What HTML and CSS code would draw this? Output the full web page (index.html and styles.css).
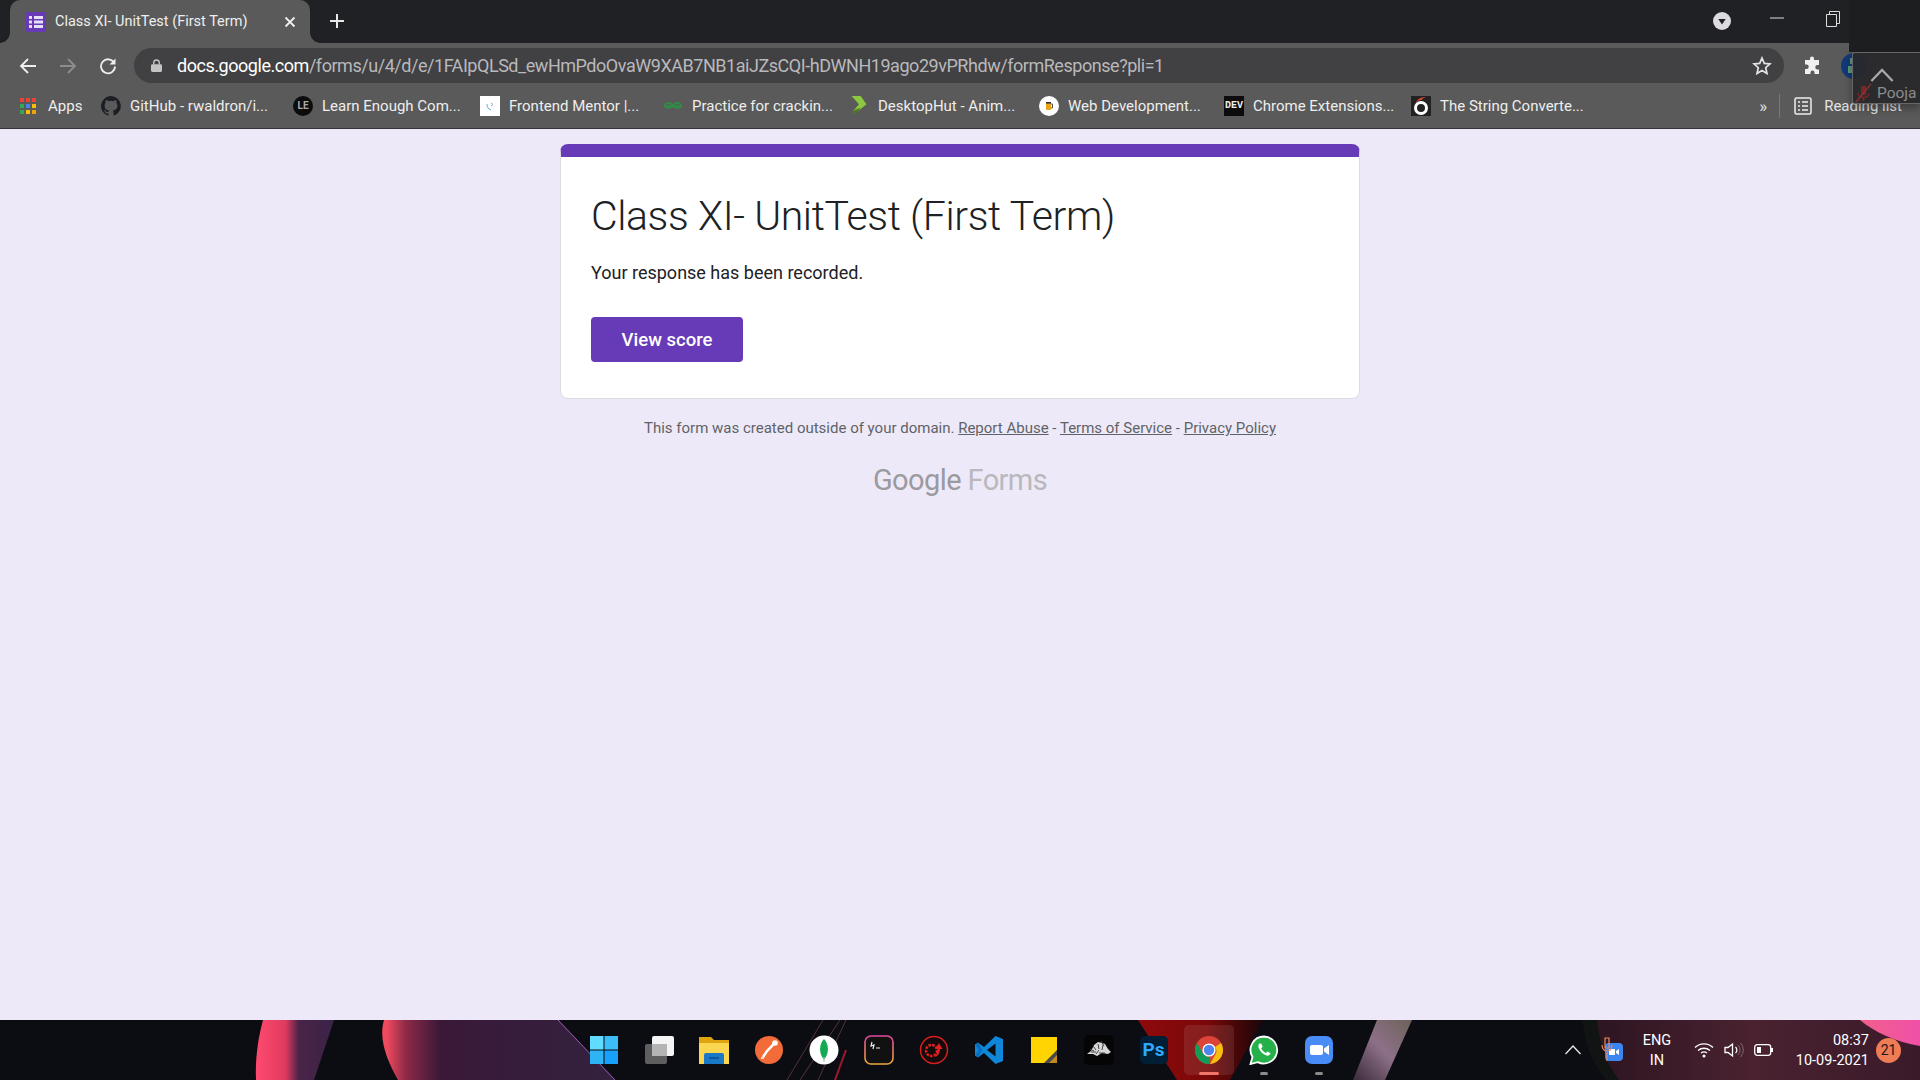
FILE: index.html
```html
<!DOCTYPE html>
<html lang="en">
<head>
  <meta charset="UTF-8">
  <title>Class XI- UnitTest (First Term)</title>
  <link rel="stylesheet" href="styles.css">
</head>
<body>
  <div class="browser">
    <!-- tab strip -->
    <div class="tabstrip">
      <div class="tab">
        <svg class="tab-icon" viewBox="0 0 20 20"><rect width="20" height="20" rx="1" fill="#673ab7"/><path d="M3 4h3v3H3zM8 4h9v3H8zM3 8.500h3v3H3zM8 8.500h9v3H8zM3 13h3v3H3zM8 13h9v3H8z" fill="#e8e0f6"/></svg>
        <span class="tab-title">Class XI- UnitTest (First Term)</span>
        <svg class="tab-close" viewBox="0 0 12 12"><path d="M1.500 1.500l9 9M10.500 1.500l-9 9" stroke="#eee" stroke-width="1.800"/></svg>
      </div>
      <svg class="new-tab" viewBox="0 0 16 16"><path d="M8 1v14M1 8h14" stroke="#e8e8e8" stroke-width="2"/></svg>
      <div class="win-controls">
        <svg class="tab-search" viewBox="0 0 18 18"><circle cx="9" cy="9" r="9" fill="#dcdce0"/><path d="M5.300 7h7.400L9 12.500z" fill="#202124"/></svg>
        <svg class="win-min" viewBox="0 0 14 2"><path d="M0 1h14" stroke="#ddd"/></svg>
        <svg class="win-max" viewBox="0 0 14 16"><path d="M.5 3.500h10v12H.500zM3.500 3.500V.5h10v12h-3" fill="none" stroke="#ddd"/></svg>
      </div>
    </div>

    <!-- address bar -->
    <div class="toolbar">
      <svg class="nav-icon" viewBox="0 0 18 18"><path d="M17 9H2M9 2L2 9l7 7" fill="none" stroke="#eee" stroke-width="1.800"/></svg>
      <svg class="nav-icon" viewBox="0 0 18 18"><path d="M1 9h15M9 2l7 7-7 7" fill="none" stroke="#8d8d8d" stroke-width="1.800"/></svg>
      <svg class="nav-icon" viewBox="0 0 18 18"><path d="M15.200 6A7 7 0 1 0 16 9.500" fill="none" stroke="#eee" stroke-width="1.800"/><path d="M16.500 1.500v6h-6z" fill="#eee"/></svg>
      <div class="omnibox">
        <svg class="lock" viewBox="0 0 12 14"><path d="M3 6V4a3 3 0 0 1 6 0v2" fill="none" stroke="#c4c4c4" stroke-width="1.500"/><rect y="5.500" width="12" height="8.500" rx="1.500" fill="#c4c4c4"/></svg>
        <span class="url"><b>docs.google.com</b>/forms/u/4/d/e/1FAIpQLSd_ewHmPdoOvaW9XAB7NB1aiJZsCQI-hDWNH19ago29vPRhdw/formResponse?pli=1</span>
        <svg class="star" viewBox="0 0 20 20"><path d="M10 2l2.300 5.400 5.700.5-4.300 3.800 1.300 5.700-5-3-5 3 1.300-5.700L2 7.900l5.700-.5z" fill="none" stroke="#e4e4e4" stroke-width="1.700"/></svg>
      </div>
      <svg class="puzzle" viewBox="0 0 20 20"><path d="M7 2.500a2 2 0 0 1 4 0V4h5v5h-1.500a2.200 2.200 0 0 0 0 4.500H16V18h-4.500v-1.500a2 2 0 0 0-4 0V18H2v-5h1.500a2.200 2.200 0 0 0 0-4.500H2V4h5z" fill="#f0f0f0"/></svg>
      <svg class="avatar" viewBox="0 0 26 26"><circle cx="13" cy="13" r="13" fill="#123a78"/><path d="M9 5h3v6H9zM7 13h6v7H7z" fill="#5f9a7a"/></svg>
    </div>

    <!-- bookmarks -->
    <div class="bookmarks">
      <div class="bm apps">
        <svg class="bm-icon" viewBox="0 0 16 16"><path d="M0 0h4v4H0z" fill="#ea4335"/><path d="M6 0h4v4H6z" fill="#ea4335"/><path d="M12 0h4v4h-4z" fill="#ea4335"/><path d="M0 6h4v4H0z" fill="#34a853"/><path d="M6 6h4v4H6z" fill="#4285f4"/><path d="M12 6h4v4h-4z" fill="#fbbc05"/><path d="M0 12h4v4H0z" fill="#34a853"/><path d="M6 12h4v4H6z" fill="#fbbc05"/><path d="M12 12h4v4h-4z" fill="#f5a205"/></svg>
        <span>Apps</span>
      </div>
      <div class="bm github">
        <svg class="bm-icon" viewBox="0 0 16 16"><path d="M8 0a8 8 0 0 0-2.500 15.600c.4.100.5-.2.500-.4v-1.400c-2.200.5-2.700-1-2.700-1-.4-.9-.9-1.200-.9-1.200-.7-.5.100-.5.100-.5.800.100 1.200.8 1.200.8.700 1.200 1.900.9 2.300.7.100-.5.300-.9.500-1.100-1.800-.2-3.600-.9-3.600-4 0-.9.300-1.600.8-2.100-.1-.2-.4-1 .1-2.100 0 0 .7-.2 2.200.8a7.600 7.600 0 0 1 4 0c1.500-1 2.200-.8 2.200-.8.400 1.100.2 1.900.1 2.100.5.600.8 1.300.8 2.100 0 3.100-1.900 3.700-3.700 3.900.3.300.6.800.6 1.500v2.200c0 .2.100.5.600.4A8 8 0 0 0 8 0z" fill="#1b1f23"/></svg>
        <span>GitHub - rwaldron/i...</span>
      </div>
      <div class="bm le">
        <div class="bm-icon le-icon">LE</div>
        <span>Learn Enough Com...</span>
      </div>
      <div class="bm fm">
        <svg class="bm-icon" viewBox="0 0 20 20"><rect width="20" height="20" fill="#fff"/><path d="M7 8c0 3 1 5 4 6" fill="none" stroke="#5fb8d8"/><path d="M11 7l2 1.500-2 1.500" fill="none" stroke="#9aa7c8"/></svg>
        <span>Frontend Mentor |...</span>
      </div>
      <div class="bm gfg">
        <svg class="bm-icon" viewBox="0 0 20 14"><path d="M10 7c-2-4-7-4-8-1s5 4 8 1c3 3 9 2 8-1s-6-3-8 1zM1 7h18" fill="none" stroke="#2f8d46" stroke-width="1.600"/></svg>
        <span>Practice for crackin...</span>
      </div>
      <div class="bm dh">
        <svg class="bm-icon" viewBox="0 0 20 24"><path d="M1 0l11 0 7 10-10 8-6-0 7-8z" fill="#8dc63f"/><path d="M12 14l-3 4-7 5 2-6z" fill="#4d7a1f"/></svg>
        <span>DesktopHut - Anim...</span>
      </div>
      <div class="bm webdev">
        <svg class="bm-icon" viewBox="0 0 20 20"><circle cx="10" cy="10" r="10" fill="#fff"/><rect x="7" y="6" width="5" height="8" rx="1" fill="#e8a317"/><path d="M7 6h5v1.600H7z" fill="#333"/><path d="M12 8h1.500v4H12" fill="none" stroke="#555"/></svg>
        <span>Web Development...</span>
      </div>
      <div class="bm dev">
        <div class="bm-icon dev-icon">DEV</div>
        <span>Chrome Extensions...</span>
      </div>
      <div class="bm str">
        <svg class="bm-icon" viewBox="0 0 20 20"><rect width="20" height="20" fill="#222"/><path d="M5 7C6 3 10 1 15 1c-3 1-4 2-4 3-3 0-5 1-6 3z" fill="#d8432e"/><circle cx="10" cy="12" r="5.500" fill="none" stroke="#fff" stroke-width="3"/></svg>
        <span>The String Converte...</span>
      </div>
      <div class="bm-right">
        <span class="chevrons">»</span>
        <span class="bm-sep"></span>
        <svg class="reading" viewBox="0 0 18 18"><rect x="1" y="1" width="16" height="16" rx="1.500" fill="none" stroke="#eee" stroke-width="1.500"/><path d="M4 5h2M8 5h6M4 9h2M8 9h6M4 13h2M8 13h6" stroke="#eee" stroke-width="1.300"/></svg>
        <span>Reading list</span>
      </div>
    </div>
  </div>

  <!-- floating meeting widget -->
  <div class="corner-panel"></div>
  <div class="meet-widget">
    <svg class="meet-up" viewBox="0 0 26 15"><path d="M1.500 14L13 2l11.500 12" fill="none" stroke="#a8a8a8" stroke-width="2.500"/></svg>
    <div class="meet-user">
      <svg class="meet-mic" viewBox="0 0 17 18"><path d="M6 2h5v9H6z" fill="#7a2626"/><path d="M3 9c0 6 11 6 11 0M8.500 14v3" fill="none" stroke="#7a2626" stroke-width="1.500"/><path d="M16 0L1 18" stroke="#8c2f2f" stroke-width="1.500"/></svg>
      <span>Pooja</span>
    </div>
  </div>

  <main class="page">
    <section class="card">
      <h1>Class XI- UnitTest (First Term)</h1>
      <p class="recorded">Your response has been recorded.</p>
      <a class="score-btn">View score</a>
    </section>
    <p class="legal">This form was created outside of your domain. <a>Report Abuse</a> - <a>Terms of Service</a> - <a>Privacy Policy</a></p>
    <div class="forms-logo"><span class="g">Google</span> <span>Forms</span></div>
  </main>

  <footer class="taskbar">
    <svg class="wallpaper" viewBox="0 0 1920 60" preserveAspectRatio="none">
      <defs>
        <linearGradient id="blob1" x1="0" x2="1" y1="0" y2="0"><stop offset="0" stop-color="#ff4a6e"/><stop offset=".38" stop-color="#e03a60"/><stop offset=".55" stop-color="#4a2348"/><stop offset="1" stop-color="#3a2347"/></linearGradient>
        <linearGradient id="blob2" x1="0" x2="1" y1="0" y2="0"><stop offset=".02" stop-color="#f04a5e"/><stop offset=".1" stop-color="#8e2a48"/><stop offset=".25" stop-color="#3a1838"/><stop offset="1" stop-color="#32223f"/></linearGradient>
        <linearGradient id="red" x1="0" x2="1" y1="0" y2="0"><stop offset="0" stop-color="#8f0a0c"/><stop offset=".55" stop-color="#7a0808"/><stop offset="1" stop-color="#1a0608"/></linearGradient>
        <linearGradient id="mauve" x1="0" x2="1" y1="1" y2="0"><stop offset="0" stop-color="#3a2a38"/><stop offset=".5" stop-color="#8d7088"/><stop offset="1" stop-color="#6d6258"/></linearGradient>
        <linearGradient id="maroon" x1="0" x2="1" y1="0" y2="0"><stop offset="0" stop-color="#2a1420"/><stop offset=".5" stop-color="#4a2230"/><stop offset="1" stop-color="#3a1a2a"/></linearGradient>
        <linearGradient id="pink" x1="0" x2="1" y1="0" y2="0"><stop offset="0" stop-color="#f0608a"/><stop offset="1" stop-color="#f050a8"/></linearGradient>
      </defs>
      <rect width="1920" height="60" fill="#0c0d12"/>
      <path d="M263 0h71l-20 60h-58c-1-20 2-42 7-60z" fill="url(#blob1)"/>
      <path d="M384 0h174l57 60H398C388 42 378 20 384 0z" fill="url(#blob2)"/>
      <path d="M558 0l57 60" stroke="#a65ac0" fill="none"/>
      <path d="M787 60l36-60M800 60l40-60M818 60l28-60" stroke="#55303c" fill="none"/>
      <path d="M835 60l11-30" stroke="#a01830" stroke-width="2" fill="none"/>
      <path d="M1138 0h125l-33 60h-53z" fill="url(#red)"/>
      <path d="M1377 0h35l-27 60h-32z" fill="url(#mauve)"/>
      <path d="M1583 0c2 22 8 42 24 60h313V0z" fill="url(#maroon)"/>
      <path d="M1583 0h14c2 20 8 42 22 60h-12C1591 42 1585 22 1583 0z" fill="#101412"/>
      <path d="M1860 0h60v26c-24-4-46-14-60-26z" fill="url(#pink)"/>
    </svg>

    <div class="task-icons">
      <div class="task-item">
        <svg viewBox="0 0 30 30"><path d="M1 1h13.500v13.500H1z" fill="#5fdcff"/><path d="M15.500 1H29v13.500H15.500z" fill="#3cbdf8"/><path d="M1 15.500h13.500V29H1z" fill="#2eb3f5"/><path d="M15.500 15.500H29V29H15.500z" fill="#18a0fb"/></svg>
      </div>
      <div class="task-item">
        <svg viewBox="0 0 30 30"><rect x="1" y="9" width="22" height="20" rx="2" fill="#5e5e5e"/><rect x="8" y="1" width="22" height="20" rx="2" fill="#f4f4f4"/><rect x="8" y="9" width="15" height="12" fill="#b4b4b4"/></svg>
      </div>
      <div class="task-item">
        <svg viewBox="0 0 30 30"><path d="M0 2h12l3 3h15v24H0z" fill="#e0a50e"/><path d="M0 8h30v21H0z" fill="#fbd750"/><path d="M5 20a2 2 0 0 1 2-2h16a2 2 0 0 1 2 2v9H5z" fill="#1a78c8"/><path d="M10 23h10" stroke="#0b4c8c" stroke-width="1.500"/></svg>
      </div>
      <div class="task-item">
        <svg viewBox="0 0 30 30"><circle cx="15" cy="15" r="14" fill="#f26b38"/><path d="M9 22l4-6 5-5 2-2.500" stroke="#fff" stroke-width="2.500" fill="none"/><circle cx="21" cy="8" r="2.800" fill="#fff"/><path d="M7 23l3 0" stroke="#fff" stroke-width="1.500"/></svg>
      </div>
      <div class="task-item">
        <svg viewBox="0 0 30 30"><circle cx="15" cy="15" r="14.500" fill="#fff"/><path d="M15 4c5 5 5.500 14 0 21-5.500-7-5-16 0-21z" fill="#13aa52"/><path d="M15 22v5" stroke="#b8c4c2" stroke-width="1.200"/></svg>
      </div>
      <div class="task-item">
        <svg viewBox="0 0 30 30"><defs><linearGradient id="term" x1="0" x2="0" y1="0" y2="1"><stop offset="0" stop-color="#e0489a"/><stop offset="1" stop-color="#eda93c"/></linearGradient></defs><rect x="1" y="1" width="28" height="28" rx="6" fill="#111" stroke="url(#term)" stroke-width="1.600"/><path d="M8 7l-1 4 3-1-1 4M12 13h4" stroke="#eee" stroke-width="1.200" fill="none"/></svg>
      </div>
      <div class="task-item">
        <svg viewBox="0 0 30 30"><circle cx="15" cy="15" r="13.500" fill="#130b0b" stroke="#d81e1e" stroke-width="1.500"/><circle cx="12.500" cy="15.500" r="5.500" fill="none" stroke="#e02020" stroke-width="2.500" stroke-dasharray="2.500 1.200"/><path d="M16 22c3-1 5-4 5-8h2.500L20 8l-4 6h2.500c0 3-1 5-2.500 8z" fill="#e02020"/></svg>
      </div>
      <div class="task-item">
        <svg viewBox="0 0 30 30"><path d="M21.500 1L10 12 4 7.500 1 9.500v11l3 2L10 18l11.500 11L29 26V4z" fill="#0f86d8"/><path d="M21.500 8.500v13L13 15z" fill="#0c0d12"/><path d="M1.500 9.700L4.500 8l3.500 7-3.500 7-3-1.700L5 15z" fill="#0a6cb8"/></svg>
      </div>
      <div class="task-item">
        <svg viewBox="0 0 30 30"><path d="M2 2h26v17L19 28H2z" fill="#ffd400"/><path d="M28 15v13H15z" fill="#4a4a4a"/><path d="M28 20v8h-8z" fill="#c08a1e"/></svg>
      </div>
      <div class="task-item">
        <svg viewBox="0 0 30 30"><rect width="30" height="30" rx="5" fill="#050505"/><path d="M3 19l4-3 3-6 4-3 4 1 3 1 3 5 3 3-3 2-6-1-5 3-4-2z" fill="#d8d8d8"/><path d="M9 11l3 4M14 9l1 5M19 10l-1 5M7 17h5M15 18h6M6 14l4 2M17 6l3 5M12 19l3-4" stroke="#444"/></svg>
      </div>
      <div class="task-item">
        <div class="ps-icon">Ps</div>
      </div>
      <div class="task-item active">
        <svg viewBox="0 0 30 30"><circle cx="15" cy="15" r="14" fill="#db4437"/><path d="M27.100 8A14 14 0 0 1 16 29l6-10.500a7 7 0 0 0-1-6.500z" fill="#f4c20d"/><path d="M16 29A14 14 0 0 1 3 8l6 10.500a7 7 0 0 0 7 3z" fill="#0f9d58"/><circle cx="15" cy="15" r="6.600" fill="#fff"/><circle cx="15" cy="15" r="5.200" fill="#4e86ee"/></svg>
        <span class="run-dot on"></span>
      </div>
      <div class="task-item">
        <svg viewBox="0 0 30 30"><path d="M15 1.500a13.500 13.500 0 0 0-11.500 20.500L1.500 29l7.200-1.900A13.500 13.500 0 1 0 15 1.500z" fill="#25b04a" stroke="#fff" stroke-width="1.800"/><path d="M10.500 8.500c-1.500 1.200-1.500 3.500 0 6 1.500 2.700 4 5 7 6 2 .6 3.500-.5 4-2.300l-3-1.700-1.500 1.500c-2-.8-4-2.800-4.800-4.800l1.500-1.500-1.500-3.200z" fill="#fff"/></svg>
        <span class="run-dot"></span>
      </div>
      <div class="task-item">
        <svg viewBox="0 0 30 30"><rect x="1" y="1" width="28" height="28" rx="7" fill="#4a8cf7"/><rect x="6" y="10" width="13" height="10" rx="2" fill="#fff"/><path d="M20 13.500l5-3.500v10l-5-3.500z" fill="#fff"/></svg>
        <span class="run-dot"></span>
      </div>
    </div>

    <div class="tray">
      <svg class="tray-up" viewBox="0 0 16 10"><path d="M.5 9L8 1l7.500 8" fill="none" stroke="#eee" stroke-width="1.200"/></svg>
      <svg class="tray-zoom" viewBox="0 0 22 26"><rect x="4" y="6" width="18" height="18" rx="4" fill="#3d85f0"/><path d="M8 12h6v6H8zM15 14l3-2v6l-3-2z" fill="#fff"/><path d="M4 1h4v10H4zM1 8c0 8 10 8 10 0M6 15v9" fill="none" stroke="#ea8a5a" stroke-width="1.200"/></svg>
      <div class="tray-lang">ENG<br>IN</div>
      <svg class="tray-wifi" viewBox="0 0 20 16"><path d="M1 5.500a13 13 0 0 1 18 0M4 8.500a9 9 0 0 1 12 0M7 11a5 5 0 0 1 6 0" fill="none" stroke="#fff" stroke-width="1.400"/><circle cx="10" cy="14" r="1.500" fill="#fff"/></svg>
      <svg class="tray-vol" viewBox="0 0 20 16"><path d="M1 5.500h3L8.500 2v12L4 10.500H1z" fill="none" stroke="#fff" stroke-width="1.300"/><path d="M11.500 5a4 4 0 0 1 0 6" fill="none" stroke="#fff" stroke-width="1.200"/><path d="M14 3a7 7 0 0 1 0 10M16.500 1a10 10 0 0 1 0 14" fill="none" stroke="#7d6670" stroke-width="1"/></svg>
      <svg class="tray-batt" viewBox="0 0 20 12"><rect x=".7" y=".7" width="16" height="10.600" rx="2.500" fill="none" stroke="#fff" stroke-width="1.300"/><rect x="3" y="3" width="4" height="6" fill="#fff"/><path d="M18 4v4" stroke="#fff" stroke-width="2"/></svg>
      <div class="tray-clock">08:37<br>10-09-2021</div>
      <div class="tray-badge">21</div>
    </div>
  </footer>
</body>
</html>
```

FILE: styles.css
```css
* {
  box-sizing: border-box;
}

html,
body {
  height: 100%;
}

body {
  margin: 0;
  height: 1080px;
  overflow: hidden;
  display: flex;
  flex-direction: column;
  position: relative;
  background-color: #eee9f8;
  font-family: Roboto, "Liberation Sans", sans-serif;
}

/* Browser chrome */
.browser {
  flex: none;
  height: 129px;
  background-color: #5a5a5a;
  border-bottom: 1px solid #33343a;
}

.tabstrip {
  height: 43px;
  background-color: #202124;
  display: flex;
  align-items: flex-start;
  padding-left: 10px;
}

.tab {
  position: relative;
  width: 300px;
  height: 43px;
  background-color: #5a5a5a;
  border-radius: 10px 10px 0 0;
  display: flex;
  align-items: center;
  padding-left: 16px;
  padding-right: 14px;
  color: #eee;
}

/* Flared corners at the foot of the tab */
.tab::before,
.tab::after {
  content: "";
  position: absolute;
  bottom: 0;
  width: 10px;
  height: 10px;
}

.tab::before {
  left: -10px;
  background: radial-gradient(circle at 0 0, #202124 9.500px, #5a5a5a 10px);
}

.tab::after {
  right: -10px;
  background: radial-gradient(circle at 100% 0, #202124 9.500px, #5a5a5a 10px);
}

.tab-icon {
  width: 20px;
  height: 20px;
  margin-right: 9px;
}

.tab-title {
  flex: 1;
  font-size: 14.500px;
  white-space: nowrap;
}

.tab-close {
  width: 12px;
  height: 12px;
}

.new-tab {
  width: 16px;
  height: 16px;
  margin: 13px 0 0 19px;
}

.win-controls {
  margin-left: auto;
  display: flex;
  align-items: flex-start;
  width: 207px;
  height: 43px;
}

.tab-search {
  width: 18px;
  height: 18px;
  margin: 12px 0 0 0;
}

.win-min {
  width: 14px;
  height: 2px;
  margin: 17px 0 0 39px;
}

.win-max {
  width: 14px;
  height: 16px;
  margin: 11px 0 0 42px;
}

.toolbar {
  height: 40px;
  display: flex;
  align-items: center;
  padding-left: 19px;
  padding-top: 5px;
}

.nav-icon {
  width: 18px;
  height: 18px;
  margin-right: 22px;
}

.omnibox {
  width: 1650px;
  height: 35px;
  margin-left: -5px;
  background-color: #414043;
  border-radius: 18px;
  display: flex;
  align-items: center;
  padding-left: 17px;
  padding-right: 12px;
}

.lock {
  width: 11px;
  height: 13px;
  margin-right: 15px;
}

.url {
  flex: 1;
  font-size: 18px;
  letter-spacing: -0.46px;
  color: #b9b9bb;
  white-space: nowrap;
}

.url b {
  font-weight: 400;
  color: #fff;
}

.star {
  width: 20px;
  height: 20px;
}

.puzzle {
  width: 20px;
  height: 20px;
  margin-left: 19px;
}

.avatar {
  width: 26px;
  height: 26px;
  margin-left: 18px;
  flex: none;
}

.bookmarks {
  height: 45px;
  display: flex;
  align-items: center;
  padding-left: 20px;
  padding-top: 1px;
  font-size: 15px;
  color: #eee;
  white-space: nowrap;
}

.bm {
  display: flex;
  align-items: center;
}

.bm-icon {
  width: 20px;
  height: 20px;
  margin-right: 9px;
  flex: none;
}

.apps { width: 81px; }
.github { width: 192px; }
.le { width: 187px; }
.fm { width: 183px; }
.gfg { width: 186px; }
.dh { width: 190px; }
.webdev { width: 185px; }
.dev { width: 187px; }

.apps .bm-icon {
  width: 16px;
  height: 16px;
  margin-right: 12px;
}

.le-icon {
  border-radius: 50%;
  background-color: #0c0c0c;
  color: #aaa;
  font-size: 10px;
  font-weight: 700;
  text-align: center;
  line-height: 20px;
}

.dev-icon {
  background-color: #0c0c0c;
  color: #eee;
  font-family: "Liberation Mono", monospace;
  font-size: 10px;
  font-weight: 700;
  text-align: center;
  line-height: 20px;
}

.bm-right {
  margin-left: auto;
  display: flex;
  align-items: center;
  padding-right: 18px;
  color: #e4e4e4;
}

.chevrons {
  font-size: 17px;
  margin-right: 12px;
}

.bm-sep {
  width: 1px;
  height: 24px;
  background-color: #7a7a7a;
  margin-right: 14px;
}

.reading {
  width: 18px;
  height: 18px;
  margin-right: 12px;
}

/* Dark panel behind the meeting widget */
.corner-panel {
  position: absolute;
  top: 0;
  right: 0;
  width: 71px;
  height: 52px;
  background-color: #1d1e20;
}

.meet-widget {
  position: absolute;
  top: 52px;
  right: 0;
  width: 68px;
  height: 52px;
  background-color: rgba(40, 40, 42, 0.93);
  border: 1px solid #666;
  border-right: none;
  border-radius: 3px 0 0 3px;
  box-shadow: 0 4px 10px rgba(0, 0, 0, 0.35);
  display: flex;
  flex-direction: column;
  padding: 15px 0 0 2px;
  color: #8d8d8d;
  font-size: 15.500px;
}

.meet-up {
  width: 24px;
  height: 14px;
  margin-left: 15px;
}

.meet-user {
  display: flex;
  align-items: center;
  margin-top: 2px;
}

.meet-mic {
  width: 17px;
  height: 18px;
  margin-right: 5px;
}

/* Form page */
.page {
  flex: 1;
  display: flex;
  flex-direction: column;
  align-items: center;
  padding-top: 15px;
}

.card {
  width: 800px;
  height: 255px;
  background-color: #fff;
  border: 1px solid #dadce0;
  border-top: 13px solid #673ab7;
  border-radius: 8px;
  padding: 33px 30px 0;
}

.card h1 {
  margin: 0;
  font-size: 41px;
  font-weight: 300;
  line-height: 52px;
  letter-spacing: -0.4px;
  color: #202124;
}

.recorded {
  margin: 19px 0 0;
  font-size: 18px;
  line-height: 24px;
  color: #202124;
}

.score-btn {
  display: inline-flex;
  align-items: center;
  justify-content: center;
  width: 152px;
  height: 45px;
  margin-top: 32px;
  background-color: #673ab7;
  border-radius: 4px;
  color: #fff;
  font-size: 18.500px;
  font-weight: 500;
}

.legal {
  margin: 19px 0 0;
  font-size: 15px;
  line-height: 20px;
  color: #5f6368;
}

.legal a {
  text-decoration: underline;
}

.forms-logo {
  margin-top: 25px;
  font-size: 29px;
  line-height: 34px;
  color: #b8b8bd;
  letter-spacing: -0.6px;
}

.forms-logo .g {
  color: #9a9a9f;
}

/* Taskbar */
.taskbar {
  flex: none;
  height: 60px;
  position: relative;
  background-color: #0c0d12;
}

.wallpaper {
  position: absolute;
  top: 0;
  left: 0;
  width: 100%;
  height: 60px;
}

.task-icons {
  position: absolute;
  left: 576px;
  top: 0;
  display: flex;
}

.task-item {
  position: relative;
  width: 55px;
  height: 60px;
  display: flex;
  align-items: center;
  justify-content: center;
}

.task-item svg {
  width: 30px;
  height: 30px;
}

.task-item.active::before {
  content: "";
  position: absolute;
  left: 3px;
  right: 2px;
  top: 5px;
  bottom: 5px;
  background-color: rgba(255, 255, 255, 0.09);
  border-radius: 5px;
}

.task-item.active svg {
  position: relative;
}

.run-dot {
  position: absolute;
  left: 24px;
  bottom: 5px;
  width: 8px;
  height: 3px;
  border-radius: 2px;
  background-color: #8b8b8b;
}

.run-dot.on {
  left: 18px;
  width: 20px;
  background-color: #f0766a;
}

.ps-icon {
  width: 28px;
  height: 28px;
  border-radius: 5px;
  background-color: #001e36;
  color: #31a8ff;
  font-size: 19px;
  font-weight: 700;
  line-height: 28px;
  text-align: center;
}

.tray {
  position: absolute;
  right: 0;
  top: 0;
  height: 60px;
  width: 355px;
  display: flex;
  align-items: center;
  color: #fff;
  font-size: 14.500px;
}

.tray-up {
  width: 16px;
  height: 10px;
}

.tray-zoom {
  width: 22px;
  height: 26px;
  margin-left: 20px;
}

.tray-lang {
  width: 40px;
  margin-left: 14px;
  padding-top: 2px;
  text-align: center;
  line-height: 20px;
}

.tray-wifi {
  width: 20px;
  height: 16px;
  margin-left: 17px;
}

.tray-vol {
  width: 20px;
  height: 16px;
  margin-left: 10px;
}

.tray-batt {
  width: 20px;
  height: 12px;
  margin-left: 10px;
}

.tray-clock {
  width: 75px;
  margin-left: 20px;
  padding-top: 2px;
  text-align: right;
  line-height: 20px;
}

.tray-badge {
  width: 25px;
  height: 25px;
  margin-left: 7px;
  background-color: #ee7c55;
  border-radius: 50%;
  color: #1a1a1a;
  font-size: 14px;
  line-height: 25px;
  text-align: center;
}
```
